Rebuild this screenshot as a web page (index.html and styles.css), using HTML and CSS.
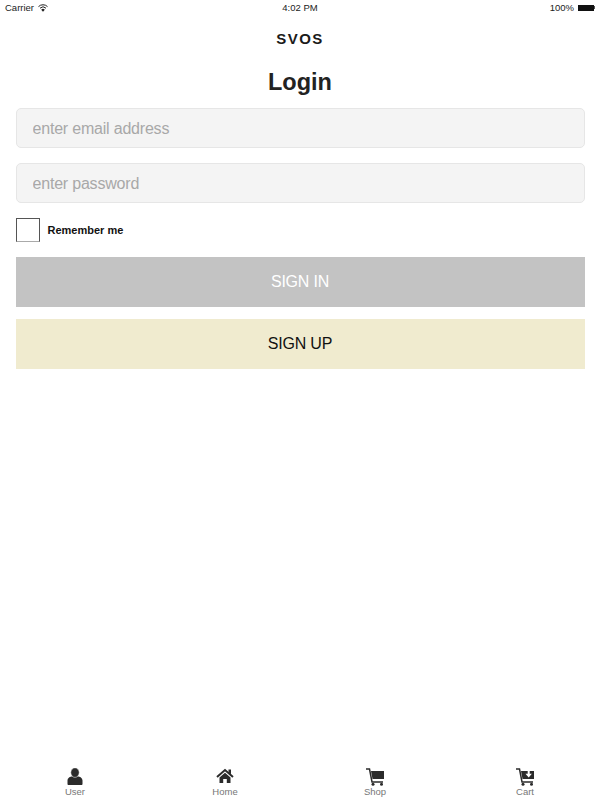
FILE: index.html
```html
<!DOCTYPE html>
<html lang="en">
<head>
    <meta charset="UTF-8">
    <meta name="viewport" content="width=device-width, initial-scale=1.0">
    <title>SVOS Login</title>
    <link rel="stylesheet" href="styles.css">
</head>
<body>
    <div class="app">
        <div class="status-bar">
            <div class="status-left">
                <span>Carrier</span>
                <svg class="wifi-icon" viewBox="0 0 10 8" width="10" height="8">
                    <path d="M.5 2.600a6.400 6.400 0 0 1 9 0M2 4.200a4.300 4.300 0 0 1 6 0" fill="none" stroke="#222" stroke-width="1"/>
                    <path d="M5 7.800 3.200 5.700a2.600 2.600 0 0 1 3.600 0z" fill="#222"/>
                </svg>
            </div>
            <div class="status-time">4:02 PM</div>
            <div class="status-right">
                <span>100%</span>
                <div class="battery"><div class="battery-body"></div><div class="battery-tip"></div></div>
            </div>
        </div>

        <div class="brand">SVOS</div>
        <h1 class="title">Login</h1>

        <form class="login-form">
            <input class="text-input" type="text" placeholder="enter email address">
            <input class="text-input" type="password" placeholder="enter password">
            <div class="remember-row">
                <div class="checkbox"></div>
                <span class="remember-label">Remember me</span>
            </div>
            <div class="btn btn-signin">SIGN IN</div>
            <div class="btn btn-signup">SIGN UP</div>
        </form>

        <div class="tab-bar">
            <div class="tab">
                <svg viewBox="0 0 18 18" width="18" height="18">
                    <path d="M1.500 16v-3.500c0-2.500 2.500-4 5-4.300.7.600 1.500.9 2.500.9s1.800-.3 2.500-.9c2.500.3 5 1.800 5 4.300V16c0 .6-.5 1-1 1h-13c-.5 0-1-.4-1-1z" fill="#2b2b2b"/>
                    <ellipse cx="9" cy="4.600" rx="4.200" ry="4.800" fill="#2b2b2b" stroke="#fff" stroke-width=".5"/>
                </svg>
                <span class="tab-label">User</span>
            </div>
            <div class="tab">
                <svg viewBox="0 0 18 18" width="18" height="18">
                    <path d="M1 9 9 2l8 7" fill="none" stroke="#2b2b2b" stroke-width="2"/>
                    <path d="M12.500 1.500H15v5l-2.500-2.200z" fill="#2b2b2b"/>
                    <path d="M9 4.800 3.500 9.600V15h3.700v-4h3.600v4h3.700V9.600z" fill="#2b2b2b"/>
                </svg>
                <span class="tab-label">Home</span>
            </div>
            <div class="tab">
                <svg viewBox="0 0 18 18" width="18" height="18">
                    <path d="M0 1h3.500L6 14h11" fill="none" stroke="#2b2b2b" stroke-width="1.500"/>
                    <path d="M5 3h13v8H6.500z" fill="#2b2b2b"/>
                    <circle cx="7" cy="16.300" r="1.500" fill="#2b2b2b"/>
                    <circle cx="15.500" cy="16.300" r="1.500" fill="#2b2b2b"/>
                </svg>
                <span class="tab-label">Shop</span>
            </div>
            <div class="tab">
                <svg viewBox="0 0 18 18" width="18" height="18">
                    <path d="M0 1h3.500L6 14h11" fill="none" stroke="#2b2b2b" stroke-width="1.500"/>
                    <path d="M5 3h13v8H6.500z" fill="#2b2b2b"/>
                    <circle cx="7" cy="16.300" r="1.500" fill="#2b2b2b"/>
                    <circle cx="15.500" cy="16.300" r="1.500" fill="#2b2b2b"/>
                    <path d="M11.700 2.500v3.300H9.500l3.200 3.600 3.200-3.600h-2.200V2.500z" fill="#fff"/>
                </svg>
                <span class="tab-label">Cart</span>
            </div>
        </div>
    </div>
</body>
</html>
```

FILE: styles.css
```css
* {
    margin: 0;
    padding: 0;
    box-sizing: border-box;
}

body {
    font-family: "Liberation Sans", Arial, sans-serif;
    background-color: #ffffff;
    height: 100vh;
    overflow: hidden;
}

.app {
    height: 800px;
    display: flex;
    flex-direction: column;
}

/* Status bar */
.status-bar {
    height: 15px;
    padding: 0 5px;
    display: grid;
    grid-template-columns: 1fr auto 1fr;
    align-items: center;
    font-size: 9.5px;
    color: #222;
}

.status-left {
    display: flex;
    align-items: center;
    gap: 4px;
}

.status-right {
    display: flex;
    align-items: center;
    justify-content: flex-end;
    gap: 4px;
}

.battery {
    display: flex;
    align-items: center;
}

.battery-body {
    width: 16px;
    height: 6px;
    background-color: #111;
}

.battery-tip {
    width: 1px;
    height: 3px;
    background-color: #555;
}

/* Heading */
.brand {
    margin-top: 16px;
    text-align: center;
    font-size: 15px;
    line-height: 16px;
    font-weight: bold;
    letter-spacing: 1.4px;
    color: #1a1a1a;
}

.title {
    margin-top: 20px;
    text-align: center;
    font-size: 23.5px;
    line-height: 30px;
    font-weight: bold;
    color: #222;
}

/* Form */
.login-form {
    margin-top: 11px;
    padding: 0 15.5px;
    display: flex;
    flex-direction: column;
}

.text-input {
    height: 40px;
    margin-bottom: 15px;
    padding: 2px 16px 0;
    background-color: #f4f4f4;
    border: 1px solid #e6e6e6;
    border-radius: 5px;
    font-family: inherit;
    font-size: 16px;
    letter-spacing: -0.2px;
    outline: none;
}

.text-input::placeholder {
    color: #a8a8a8;
    opacity: 1;
}

.remember-row {
    display: flex;
    align-items: center;
    gap: 8px;
    margin-bottom: 15px;
}

.checkbox {
    width: 24px;
    height: 24px;
    border: 1px solid #555;
    border-bottom-color: #aaa;
}

.remember-label {
    font-size: 11px;
    font-weight: bold;
    color: #111;
}

.btn {
    height: 50px;
    display: flex;
    align-items: center;
    justify-content: center;
    font-size: 16px;
    letter-spacing: -0.2px;
}

.btn-signin {
    background-color: #c3c3c3;
    color: #ffffff;
    margin-bottom: 12px;
}

.btn-signup {
    background-color: #f0ebcf;
    color: #111;
}

/* Tabs */
.tab-bar {
    margin-top: auto;
    height: 32px;
    display: grid;
    grid-template-columns: repeat(4, 1fr);
}

.tab {
    display: flex;
    flex-direction: column;
    align-items: center;
}

.tab-label {
    font-size: 9.5px;
    line-height: 11px;
    color: #777;
}
```
